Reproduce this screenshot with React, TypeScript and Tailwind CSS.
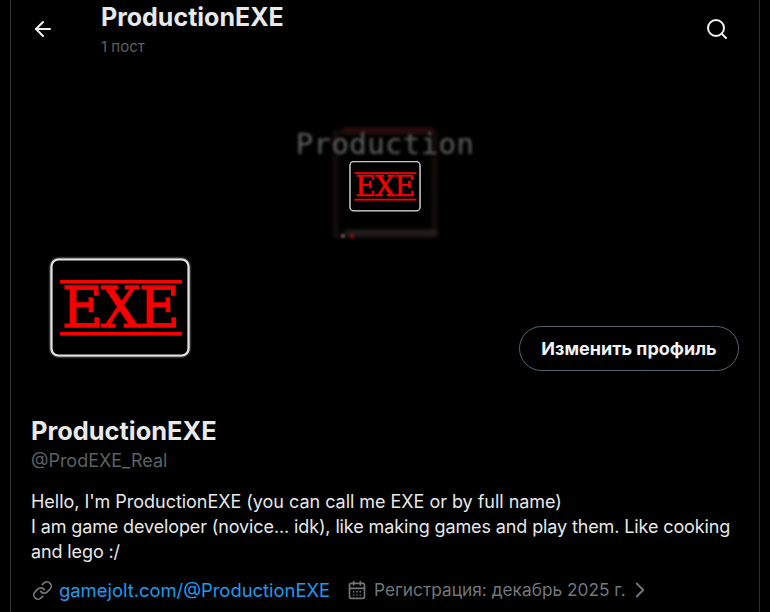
import { ArrowLeft, Search, Link, CalendarDays, ChevronRight } from 'lucide-react';

function ExeLogo() {
  return (
    <svg viewBox="0 0 140 100" className="w-full h-full overflow-visible">
      <defs>
        <filter id="soft" x="-10%" y="-10%" width="120%" height="120%">
          <feGaussianBlur stdDeviation="0.45" />
        </filter>
        <filter id="halo" x="-10%" y="-10%" width="120%" height="120%">
          <feGaussianBlur stdDeviation="1.2" />
        </filter>
      </defs>
      <rect x="1.5" y="1.5" width="137" height="96" rx="7" fill="none" stroke="#8a8a8a" strokeWidth="3" filter="url(#halo)" />
      <rect x="1.5" y="1.5" width="137" height="96" rx="7" fill="#000" stroke="#e2e2e2" strokeWidth="2.2" filter="url(#soft)" />
      <g filter="url(#soft)">
        <rect x="10" y="22" width="122" height="3.6" fill="#f60000" />
        <rect x="10" y="74" width="122" height="3.6" fill="#f60000" />
        <text
          x="71"
          y="69"
          textAnchor="middle"
          fill="#f60000"
          stroke="#f60000"
          strokeWidth="1.3"
          fontFamily="'DejaVu Serif', serif"
          fontSize="56"
          fontWeight="400"
          textLength="118"
          lengthAdjust="spacing"
        >
          EXE
        </text>
      </g>
    </svg>
  );
}

function Banner() {
  return (
    <div className="h-[196px] flex justify-center pt-[66px]">
      <div className="relative w-[180px] h-[114px]">
        {/* the logo's frame, blurred like a small stretched picture */}
        <div className="absolute left-[38px] top-[2px] w-[104px] h-[108px] border-[5px] border-[#170e0e] blur-[2px]" />
        <div className="absolute left-[48px] top-[0px] w-[90px] h-[4px] bg-[#3a0c0c] blur-[2px]" />
        <div className="absolute left-[50px] top-[102px] w-[92px] h-[5px] bg-[#2c2222] blur-[2px]" />
        <div className="absolute left-[46px] top-[106px] w-[4px] h-[4px] rounded-full bg-[#6a5a5a] blur-[0.8px]" />
        <div className="absolute left-[55px] top-[106px] w-[4px] h-[4px] rounded-full bg-[#a01010] blur-[0.8px]" />
        <div className="absolute left-0 top-[2px] w-full text-center font-['DejaVu_Sans_Mono',monospace] text-[29px] leading-[28px] tracking-[0.4px] text-[#606060] blur-[1.4px] whitespace-nowrap">
          Production
        </div>
        <div className="absolute left-[54px] top-[33px] w-[72px] h-[51px]">
          <ExeLogo />
        </div>
      </div>
    </div>
  );
}

export default function App() {
  return (
    <div className="w-[770px] h-[612px] bg-black overflow-hidden font-['Inter',sans-serif] text-[#e7e9ea]">
      <div className="ml-[10px] w-[750px] h-full border-x border-[#2f3336]">
        <div className="h-[62px] flex items-start pl-[20px] pr-[30px]">
          <ArrowLeft className="w-[24px] h-[24px] mt-[17px] text-[#eff3f4]" strokeWidth={2} />
          <div className="ml-[46px] flex-1">
            <div className="text-[25px] leading-[34px] font-bold text-[#e7e9ea]">ProductionEXE</div>
            <div className="text-[15px] leading-[20px] mt-[3px] text-[#5b6166]">1 пост</div>
          </div>
          <Search className="w-[24px] h-[24px] mt-[17px] text-[#eff3f4]" strokeWidth={2} />
        </div>

        <Banner />

        <div className="flex items-end justify-between pl-[38px] pr-[20px]">
          <div className="w-[142px] h-[100px]">
            <ExeLogo />
          </div>
          <button className="h-[45px] w-[220px] mb-[-13px] rounded-full border border-[#536471] text-[18px] font-bold text-[#eff3f4]">
            Изменить профиль
          </button>
        </div>

        <div className="pl-[20px] pr-[20px] mt-[57px]">
          <div className="text-[25.4px] leading-[32px] font-bold">ProductionEXE</div>
          <div className="text-[18px] leading-[24px] mt-[2px] text-[#5b6166]">@ProdEXE_Real</div>
          <p className="text-[18px] leading-[25px] mt-[16px]">
            <span className="tracking-[-0.03px]">Hello, I'm ProductionEXE (you can call me EXE or by full name)</span>
            <br />
            <span className="tracking-[-0.12px]">
              I am game developer (novice... idk), like making games and play them. Like cooking and lego :/
            </span>
          </p>
          <div className="flex items-center mt-[13px] text-[18px] leading-[24px] text-[#71767b]">
            <Link className="w-[21px] h-[21px] ml-[1px]" strokeWidth={2} />
            <span className="ml-[6px] text-[18.4px] text-[#1d9bf0]">gamejolt.com/@ProductionEXE</span>
            <CalendarDays className="ml-[17px] w-[20px] h-[20px]" strokeWidth={2} />
            <span className="ml-[7px] text-[17.3px]">Регистрация: декабрь 2025 г.</span>
            <ChevronRight className="w-[26px] h-[26px] ml-[1px]" strokeWidth={1.75} />
          </div>
        </div>
      </div>
    </div>
  );
}
